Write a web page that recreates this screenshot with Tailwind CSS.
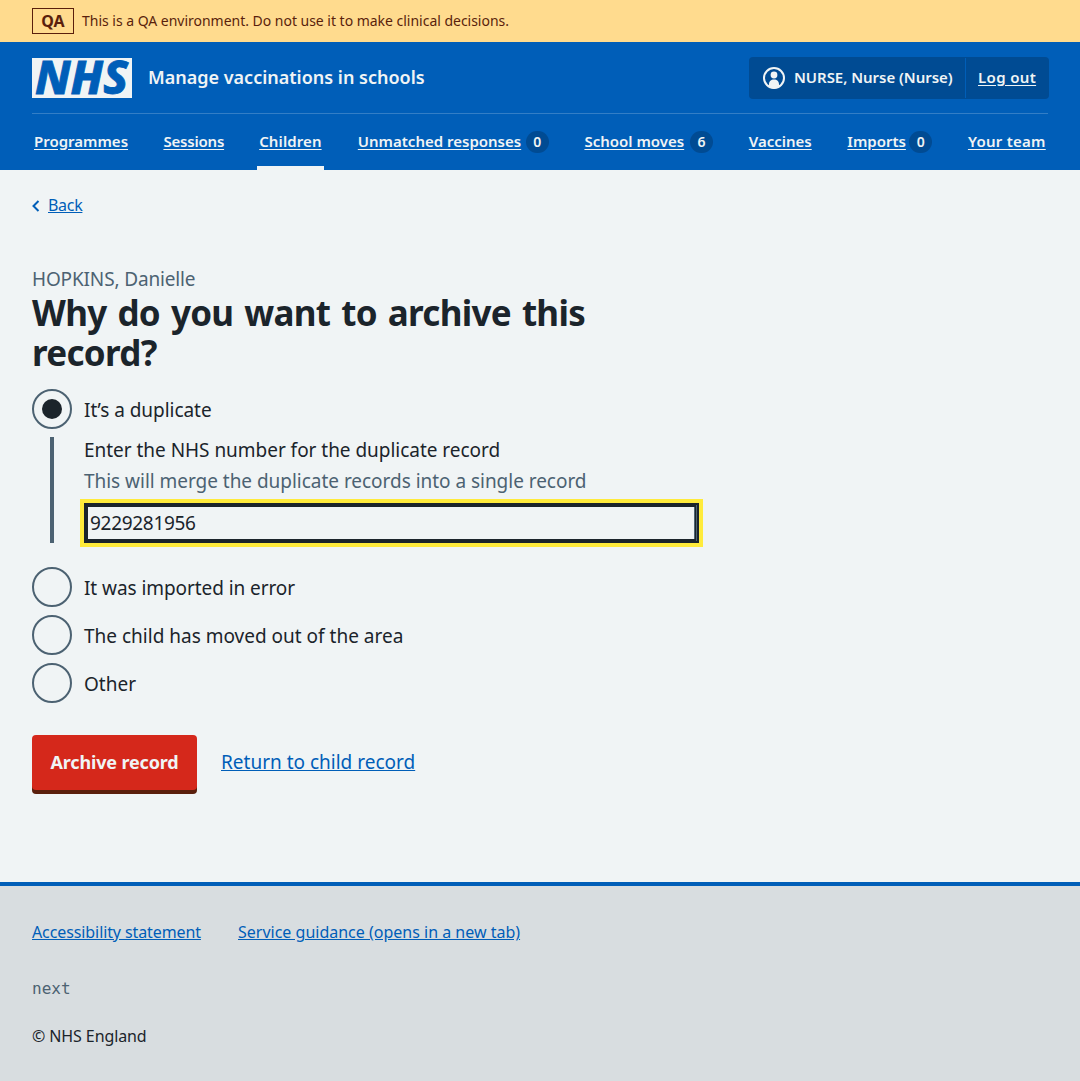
<!DOCTYPE html>
<html lang="en">
<head>
<meta charset="utf-8">
<title>Archive record – Manage vaccinations in schools</title>
<script src="https://cdn.jsdelivr.net/npm/@tailwindcss/browser@4"></script>
</head>
<body class="min-h-screen bg-[#f0f4f5] font-['Noto_Sans',sans-serif] text-[19px] leading-7 text-[#1b242b]">
<div class="flex h-[42px] items-center gap-2 bg-[#ffdb8e] px-8 text-[#5a1f0c]">
  <strong class="flex h-[26px] w-[42px] items-center justify-center border border-[#5a1f0c] pb-px text-base font-bold">QA</strong>
  <span class="whitespace-nowrap text-sm tracking-[-0.02px]">This is a QA environment. Do not use it to make clinical decisions.</span>
</div>
<header class="h-32 bg-[#005eb8] px-8 text-[15px] font-semibold text-[#f0f4f5]">
  <div class="flex h-[72px] items-center border-b border-[#337ec6]">
    <svg class="mr-4 h-10 w-[100px]" viewBox="0 0 100 40" role="img" aria-label="NHS">
      <rect width="100" height="40" fill="#f0f4f5"/>
      <text x="3" y="36" font-family="Noto Sans" font-weight="800" font-style="italic" font-size="45.500" textLength="93" lengthAdjust="spacingAndGlyphs" fill="#005eb8" stroke="#005eb8" stroke-width="0.800">NHS</text>
    </svg>
    <span class="whitespace-nowrap pb-0.5 text-lg leading-7">Manage vaccinations in schools</span>
    <div class="-mr-px ml-auto flex h-[42px] w-[300px] items-center rounded bg-[#004b93]">
      <div class="flex h-10 w-[217px] items-center gap-2 whitespace-nowrap border-r border-[#005eb8] pl-[13px]">
        <svg class="size-6 shrink-0" viewBox="0 0 24 24" fill="none"><circle cx="12" cy="12" r="10" stroke="#f0f4f5" stroke-width="2"/><circle cx="12" cy="9" r="3.400" fill="#f0f4f5"/><path d="M12 13.500c3 0 5 2 5 4.700v3a10 10 0 0 1-10 0v-3c0-2.700 2-4.700 5-4.700z" fill="#f0f4f5"/></svg>
        <span class="pb-px tracking-[-0.04px]">NURSE, Nurse (Nurse)</span>
      </div>
      <a class="pb-px pl-3 tracking-[0.35px] underline underline-offset-2">Log out</a>
    </div>
  </div>
  <nav class="flex h-14 justify-between whitespace-nowrap px-0.5 leading-[54px]">
    <a class="w-[93.800px] underline underline-offset-2">Programmes</a>
    <a class="w-[60.200px] tracking-[-0.2px] underline underline-offset-2">Sessions</a>
    <a class="-mx-0.5 w-[67px] border-b-4 border-[#f0f4f5] px-0.5 tracking-[0.1px] underline underline-offset-2">Children</a>
    <a class="flex w-[191px] items-center justify-between"><span class="h-14 underline underline-offset-2">Unmatched responses</span><span class="flex h-[22px] w-[23px] items-center justify-center rounded-full bg-[#004b93] text-sm">0</span></a>
    <a class="flex w-[128.700px] items-center justify-between"><span class="h-14 underline underline-offset-2">School moves</span><span class="flex h-[22px] w-[23px] items-center justify-center rounded-full bg-[#004b93] text-sm">6</span></a>
    <a class="w-[63px] underline underline-offset-2">Vaccines</a>
    <a class="flex w-[85px] items-center justify-between"><span class="h-14 underline underline-offset-2">Imports</span><span class="flex h-[22px] w-[23px] items-center justify-center rounded-full bg-[#004b93] text-sm">0</span></a>
    <a class="w-[78px] tracking-[0.25px] underline underline-offset-2">Your team</a>
  </nav>
</header>
<main class="h-[712px] px-8 pt-[23px]">
  <a class="flex h-6 items-center text-base text-[#005eb8]">
    <svg class="mr-2 mt-0.5 h-3 w-2" viewBox="0 0 8 12" fill="none" stroke="#005eb8" stroke-width="2"><path d="M6.500 1L1.500 6l5 5"/></svg><span class="tracking-[-0.3px] underline">Back</span>
  </a>
  <h1 class="mt-12 w-[620px]">
    <span class="block text-[19px] tracking-[-0.150px] text-[#4c6272]">HOPKINS, Danielle</span>
    <span class="block text-[35px] font-bold leading-10 tracking-[-0.700px] [word-spacing:2.500px]">Why do you want to archive this<br>record?</span>
  </h1>
  <form class="mt-4">
    <label class="flex h-10 items-center gap-3"><span class="flex size-10 items-center justify-center rounded-full border-2 border-[#4c6272]"><span class="size-5 rounded-full bg-[#1b242b]"></span></span><span class="pt-0.5 tracking-[-0.05px]">It’s a duplicate</span></label>
    <div class="my-2 ml-[18px] flow-root h-[106px] border-l-4 border-[#4c6272] pl-[30px] tracking-[-0.03px]">
      <div class="-mt-px">Enter the NHS number for the duplicate record</div>
      <div class="mt-[3px] text-[#4c6272]">This will merge the duplicate records into a single record</div>
      <div class="mt-2 flex h-10 w-[615px] items-stretch border-4 border-[#1b242b] pl-0.5 tracking-[-0.300px] outline-4 outline-[#ffeb3b]">
        <span class="flex flex-1 items-center">9229281956</span>
        <span class="w-px bg-[#4c6272]"></span>
        <span class="-my-0.5 -mr-[2px] w-[2px] border-r border-[#4c6272] bg-[#1b242b]"></span>
      </div>
    </div>
    <div class="mt-6 grid gap-2">
      <label class="flex h-10 items-center gap-3"><span class="size-10 rounded-full border-2 border-[#4c6272]"></span><span class="pt-0.5 tracking-[-0.07px]">It was imported in error</span></label>
      <label class="flex h-10 items-center gap-3"><span class="size-10 rounded-full border-2 border-[#4c6272]"></span><span class="pt-0.5">The child has moved out of the area</span></label>
      <label class="flex h-10 items-center gap-3"><span class="size-10 rounded-full border-2 border-[#4c6272]"></span><span class="pt-0.5">Other</span></label>
    </div>
    <div class="mt-8 flex items-center gap-6">
      <button type="button" class="h-[55px] w-[165px] whitespace-nowrap rounded bg-[#d5281b] pb-px text-lg font-bold tracking-[-0.150px] text-[#f0f4f5] shadow-[0_4px_0_#5a1f0c]">Archive record</button>
      <a class="pb-0.5 text-[#005eb8] underline">Return to child record</a>
    </div>
  </form>
</main>
<footer class="h-[199px] border-t-4 border-[#005eb8] bg-[#d8dde0] px-8 pt-[34px] text-base leading-6">
  <div class="flex text-[#005eb8]"><a class="w-[206px] tracking-[-0.100px] underline">Accessibility statement</a><a class="underline">Service guidance (opens in a new tab)</a></div>
  <div class="mt-[33px] font-['DejaVu_Sans_Mono',monospace] text-[#4c6272]">next</div>
  <div class="mt-[23px] tracking-[-0.1px]">© NHS England</div>
</footer>
</body>
</html>
